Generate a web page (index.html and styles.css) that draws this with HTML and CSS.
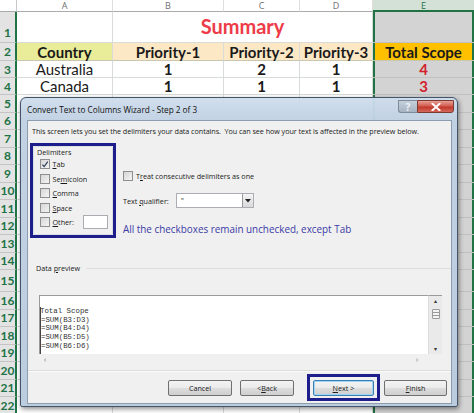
FILE: index.html
```html
<!DOCTYPE html>
<html>
<head>
<meta charset="utf-8">
<link rel="stylesheet" href="styles.css">
</head>
<body>
<div class="grid">
  <div class="corner"></div>
  <div class="ch">A</div><div class="ch">B</div><div class="ch">C</div><div class="ch">D</div><div class="ch sel">E</div>

  <div class="rh tall">1</div><div class="c"></div><div class="c title">Summary</div><div class="c e"></div>

  <div class="rh">2</div><div class="c hd ha">Country</div><div class="c hd hb">Priority-1</div><div class="c hd hb">Priority-2</div><div class="c hd hb">Priority-3</div><div class="c e hd he">Total Scope</div>

  <div class="rh">3</div><div class="c">Australia</div><div class="c b">1</div><div class="c b">2</div><div class="c b">1</div><div class="c e b red">4</div>
  <div class="rh">4</div><div class="c">Canada</div><div class="c b">1</div><div class="c b">1</div><div class="c b">1</div><div class="c e b red">3</div>
  <div class="rh">5</div><div class="c"></div><div class="c"></div><div class="c"></div><div class="c"></div><div class="c e"></div>
  <div class="rh">6</div><div class="c"></div><div class="c"></div><div class="c"></div><div class="c"></div><div class="c e"></div>
  <div class="rh">7</div><div class="c"></div><div class="c"></div><div class="c"></div><div class="c"></div><div class="c e"></div>
  <div class="rh">8</div><div class="c"></div><div class="c"></div><div class="c"></div><div class="c"></div><div class="c e"></div>
  <div class="rh">9</div><div class="c"></div><div class="c"></div><div class="c"></div><div class="c"></div><div class="c e"></div>
  <div class="rh">10</div><div class="c"></div><div class="c"></div><div class="c"></div><div class="c"></div><div class="c e"></div>
  <div class="rh">11</div><div class="c"></div><div class="c"></div><div class="c"></div><div class="c"></div><div class="c e"></div>
  <div class="rh">12</div><div class="c"></div><div class="c"></div><div class="c"></div><div class="c"></div><div class="c e"></div>
  <div class="rh">13</div><div class="c"></div><div class="c"></div><div class="c"></div><div class="c"></div><div class="c e"></div>
  <div class="rh">14</div><div class="c"></div><div class="c"></div><div class="c"></div><div class="c"></div><div class="c e"></div>
  <div class="rh">15</div><div class="c"></div><div class="c"></div><div class="c"></div><div class="c"></div><div class="c e"></div>
  <div class="rh">16</div><div class="c"></div><div class="c"></div><div class="c"></div><div class="c"></div><div class="c e"></div>
  <div class="rh">17</div><div class="c"></div><div class="c"></div><div class="c"></div><div class="c"></div><div class="c e"></div>
  <div class="rh">18</div><div class="c"></div><div class="c"></div><div class="c"></div><div class="c"></div><div class="c e"></div>
  <div class="rh">19</div><div class="c"></div><div class="c"></div><div class="c"></div><div class="c"></div><div class="c e"></div>
  <div class="rh">20</div><div class="c"></div><div class="c"></div><div class="c"></div><div class="c"></div><div class="c e"></div>
  <div class="rh">21</div><div class="c"></div><div class="c"></div><div class="c"></div><div class="c"></div><div class="c e"></div>
  <div class="rh">22</div><div class="c"></div><div class="c"></div><div class="c"></div><div class="c"></div><div class="c e"></div>
</div>

<div class="dlg">
  <div class="titlebar">
    <span class="ttl">Convert Text to Columns Wizard - Step 2 of 3</span>
    <div class="tbtns">
      <span class="help">?</span>
      <span class="close"><svg width="10" height="8" viewBox="0 0 10 8"><path d="M1.5 0.8 L8.5 7.2 M8.5 0.8 L1.5 7.2" stroke="#fff" stroke-width="2" stroke-linecap="square"/></svg></span>
    </div>
  </div>
  <div class="client">
    <p class="desc">This screen lets you set the delimiters your data contains.&nbsp; You can see how your text is affected in the preview below.</p>
    <div class="opts">
      <div class="hl delim">
        <div class="grp">
          <div class="legend">Delimiters</div>
          <div class="cb"><span class="box"><svg width="9" height="9" viewBox="0 0 9 9"><path d="M1.6 4.6 L3.6 6.8 L7.6 1.4" fill="none" stroke="#2e3d5c" stroke-width="1.4"/></svg></span><span><u>T</u>ab</span></div>
          <div class="cb"><span class="box"></span><span>Se<u>m</u>icolon</span></div>
          <div class="cb"><span class="box"></span><span><u>C</u>omma</span></div>
          <div class="cb"><span class="box"></span><span><u>S</u>pace</span></div>
          <div class="cb"><span class="box"></span><span class="olbl"><u>O</u>ther:</span><span class="other"></span></div>
        </div>
      </div>
      <div class="right">
        <div class="cb"><span class="box"></span><span>T<u>r</u>eat consecutive delimiters as one</span></div>
        <div class="qual">
          <span class="qlbl">Text <u>q</u>ualifier:</span>
          <div class="select"><span class="val">"</span><span class="dd"><svg width="6" height="4" viewBox="0 0 6 4"><path d="M0 0 H6 L3 3.5 Z" fill="#222"/></svg></span></div>
        </div>
        <p class="note">All the checkboxes remain unchecked, except Tab</p>
      </div>
    </div>
    <div class="pvlabel"><span>Data <u>p</u>review</span><span class="line"></span></div>
    <div class="preview">
      <div class="pvmain">
        <pre class="pvtext">Total Scope
=SUM(B3:D3)
=SUM(B4:D4)
=SUM(B5:D5)
=SUM(B6:D6)</pre>
      </div>
      <div class="vscroll">
        <span class="arr">&#9652;</span>
        <span class="thumb"></span>
        <span class="arr">&#9662;</span>
      </div>
      <div class="hscroll"><span>&#8249;</span><span>&#8250;</span></div>
    </div>
    <div class="sep"></div>
    <div class="btns">
      <span class="btn cancel">Cancel</span>
      <span class="btn back">&lt; <u>B</u>ack</span>
      <span class="hl nextwrap"><span class="btn next"><u>N</u>ext &gt;</span></span>
      <span class="btn finish"><u>F</u>inish</span>
    </div>
  </div>
</div>
</body>
</html>
```
FILE: styles.css
```css
* { box-sizing: border-box; margin: 0; padding: 0; }
html, body { width: 474px; height: 413px; overflow: hidden; background: #fff; }
body { position: relative; font-family: Lato, "Liberation Sans", sans-serif; }

/* ---------- spreadsheet ---------- */
.grid {
  display: grid;
  grid-template-columns: 17px 96px 111px 76px 73px 101px;
  grid-template-rows: 12px 31px 18px 17px 17px repeat(10, 17.5px) 22px repeat(7, 17.5px);
}
.corner { background: #fff; border-right: 1px solid #c9c9c9; border-bottom: 1px solid #ababab; }
.ch {
  font-family: "Open Sans", sans-serif; font-size: 9px; color: #707070;
  display: flex; align-items: center; justify-content: center;
  border-right: 1px solid #dedede; border-bottom: 1px solid #ababab; background: #fff;
}
.ch.sel { background: #d3e1d7; color: #217346; border-bottom: 2px solid #217346; border-right: none; }
.rh {
  background: #e3e3e3; color: #217346; font-size: 12px; font-weight: 700;
  display: flex; align-items: center; justify-content: center;
  border-bottom: 1px solid #c4c4c4; border-right: 2px solid #217346;
}
.rh.tall { align-items: flex-end; padding-bottom: 2px; }
.c {
  border-right: 1px solid #d8dcd8; border-bottom: 1px solid #d8dcd8;
  display: flex; align-items: center; justify-content: center;
  font-size: 15px; color: #1a1a1a; white-space: nowrap;
}
.c.title { grid-column: 3 / 6; color: #ee3b48; font-weight: 700; font-size: 20px; align-items: flex-end; padding-bottom: 4px; }
.c.e { background: #d3d3d3; border-bottom-color: #c0c0c0; box-shadow: inset 2px 0 0 #217346, inset -2px 0 0 #217346; border-right: none; }
.c.hd { font-weight: 700; border-bottom-color: #c8c8b0; }
.c.ha { background: #e9ec99; }
.c.hb { background: #fde8c6; }
.c.he { background: #ffc000; }
.c.b { font-weight: 700; }
.c.red { color: #d11f2b; }

/* ---------- dialog ---------- */
.dlg {
  position: absolute; left: 20px; top: 97px; width: 438px; height: 310px;
  border: 1px solid #44546a; border-radius: 6px 6px 2px 2px;
  background: linear-gradient(to bottom, rgba(206,220,236,0.96) 0px, rgba(192,209,227,0.97) 24px, rgba(186,203,222,0.97) 100%);
  padding: 0 5px 2px 6px;
  box-shadow: 1px 2px 5px rgba(0,0,0,0.45);
  display: flex; flex-direction: column;
  font-family: "Open Sans", sans-serif; color: #1a1a1a;
}
.titlebar { height: 22px; display: flex; justify-content: space-between; align-items: flex-start; }
.ttl { font-size: 8.2px; line-height: 10px; margin-top: 7px; color: #111; }
.tbtns { display: flex; margin-top: 2px; margin-right: -2px; }
.help {
  width: 19px; height: 13px; display: flex; align-items: center; justify-content: center;
  font-size: 10px; font-weight: 700; color: #eef2f6; line-height: 1;
  background: linear-gradient(to bottom, #c5d0dc, #a6b3c1);
  border: 1px solid #7d8a99; border-right: none; border-radius: 0 0 0 3px;
}
.close {
  width: 37px; height: 13px; display: flex; align-items: center; justify-content: center;
  background: linear-gradient(to bottom, #e6a196 0%, #d35c50 45%, #c2392c 55%, #d4685c 100%);
  border: 1px solid #7d3a33; border-radius: 0 0 3px 0;
}
.client {
  flex: 1; background: #f0f0f0; border: 1px solid #8d9db0;
  display: flex; flex-direction: column;
  font-size: 7.2px; line-height: 10px;
}
.desc { margin: 5px 0 0 4px; white-space: nowrap; letter-spacing: -0.05px; }
.opts { display: flex; margin-top: 7px; }
.hl { border: 3px solid #1d1d8c; }
.delim { margin-left: 2px; width: 86px; height: 95px; }
.grp { height: 100%; border: 1px solid #dadfe4; border-radius: 2px; padding: 0 0 0 3px; }
.legend { margin-left: 0px; line-height: 10px; font-size: 7.2px; }
.cb { display: flex; align-items: center; height: 14.5px; gap: 2.5px; white-space: nowrap; }
.grp .cb { padding-left: 3px; }
.box {
  width: 10px; height: 10px; flex: none; border: 1px solid #8f8f8f;
  background: linear-gradient(135deg, #d6d6d6, #f4f4f4);
  display: flex; align-items: center; justify-content: center;
}
.olbl { width: 28px; }
.other { width: 25px; height: 14px; background: #fff; border: 1px solid #abadb3; }
.right { display: flex; flex-direction: column; margin-left: 7px; padding-top: 27px; }
.right .cb { height: 12px; gap: 3px; }
.qual { display: flex; align-items: center; margin-top: 11px; height: 15px; }
.qlbl { width: 53px; }
.select {
  width: 78px; height: 15px; background: #fff; border: 1px solid #abadb3;
  display: flex; justify-content: space-between; align-items: center;
}
.val { padding-left: 4px; font-size: 7px; }
.dd {
  width: 11px; height: 13px; display: flex; align-items: center; justify-content: center;
  background: linear-gradient(to bottom, #f4f4f4, #d9d9d9); border-left: 1px solid #9a9a9a;
}
.note { margin-top: 15px; font-size: 9.9px; line-height: 13px; color: #3b3ba6; white-space: nowrap; }

.pvlabel { display: flex; align-items: center; margin: 25px 0 0 8px; }
.pvlabel .line { flex: 1; height: 1px; background: #dedede; margin-left: 6px; margin-top: 1px; }
.preview {
  margin: 22px 0 0 11px; width: 403px; height: 71px;
  display: grid; grid-template-columns: 1fr 14px; grid-template-rows: 59px 12px;
}
.pvmain { background: #fff; border-top: 1px solid #9a9a9a; border-left: 1px solid #9a9a9a; overflow: hidden; }
.pvtext {
  font-family: "Liberation Mono", monospace; font-size: 7.4px; line-height: 8.7px; color: #333;
  margin-top: 11px; border-left: 1px solid #444; margin-left: 0px; text-indent: -1px; height: 47px;
}
.vscroll {
  background: #eaeaea; border-top: 1px solid #9a9a9a; border-left: 1px solid #dcdcdc;
  display: flex; flex-direction: column; align-items: center; justify-content: space-between;
  font-size: 6px; line-height: 8px; color: #333; padding: 1px 0;
}
.thumb { width: 8px; height: 10px; margin-top: -22px; border: 1px solid #9a9a9a; border-radius: 1px; background: repeating-linear-gradient(to bottom, #f4f4f4 0 2px, #9a9a9a 2px 3px); }
.hscroll {
  grid-column: 1 / 2; display: flex; justify-content: space-between; align-items: center;
  padding: 0 10px 0 5px; font-size: 7px; color: #666;
}
.sep { height: 2px; border-top: 1px solid #dcdcdc; border-bottom: 1px solid #fbfbfb; margin-top: 4px; }
.btns { display: flex; justify-content: flex-end; align-items: center; margin-top: 2px; padding-right: 4px; height: 27px; }
.btn {
  height: 16px; display: flex; align-items: center; justify-content: center;
  border: 1px solid #707070; border-radius: 2px; font-size: 7.2px; color: #222;
  background: linear-gradient(to bottom, #f3f3f3 0%, #ebebeb 48%, #dddddd 52%, #cfcfcf 100%);
}
.cancel { width: 64px; }
.back { width: 54px; margin-left: 8px; }
.nextwrap { margin-left: 13px; padding: 0 3px; height: 27px; display: flex; align-items: center; }
.next { width: 61px; border-color: #3c7fb1; box-shadow: inset 0 0 0 1px #9fd3f5; }
.finish { width: 63px; margin-left: 4px; }
u { text-decoration: underline; text-underline-offset: 1px; text-decoration-thickness: 0.6px; }
```
